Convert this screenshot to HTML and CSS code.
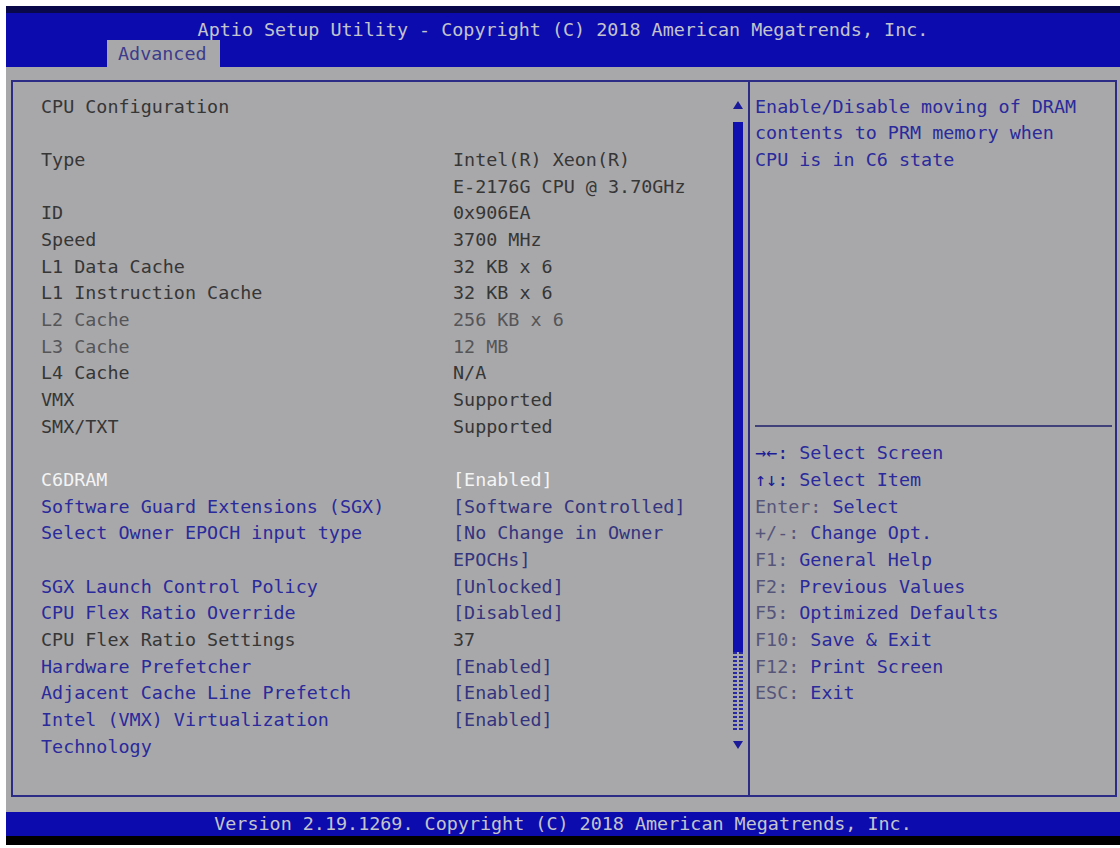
FILE: index.html
```html
<!DOCTYPE html>
<html lang="en">
<head>
  <meta charset="UTF-8">
  <title>Aptio Setup Utility</title>
  <link rel="stylesheet" href="styles.css">
</head>
<body>

  <div class="screen">
    <div class="top">
      <div class="title">Aptio Setup Utility - Copyright (C) 2018 American Megatrends, Inc.</div>
      <div class="tabs">
        <span class="tab">Advanced</span>
      </div>
    </div>

    <div class="panel">
      <div class="items">
        <div class="row"><span class="label">CPU Configuration</span></div>
        <div class="row blank"></div>
        <div class="row"><span class="label">Type</span><span class="value">Intel(R) Xeon(R)<br>E-2176G CPU @ 3.70GHz</span></div>
        <div class="row"><span class="label">ID</span><span class="value">0x906EA</span></div>
        <div class="row"><span class="label">Speed</span><span class="value">3700 MHz</span></div>
        <div class="row"><span class="label">L1 Data Cache</span><span class="value">32 KB x 6</span></div>
        <div class="row"><span class="label">L1 Instruction Cache</span><span class="value">32 KB x 6</span></div>
        <div class="row dim"><span class="label">L2 Cache</span><span class="value">256 KB x 6</span></div>
        <div class="row dim"><span class="label">L3 Cache</span><span class="value">12 MB</span></div>
        <div class="row"><span class="label">L4 Cache</span><span class="value">N/A</span></div>
        <div class="row"><span class="label">VMX</span><span class="value">Supported</span></div>
        <div class="row"><span class="label">SMX/TXT</span><span class="value">Supported</span></div>
        <div class="row blank"></div>
        <div class="row selected"><span class="label">C6DRAM</span><span class="value">[Enabled]</span></div>
        <div class="row option"><span class="label">Software Guard Extensions (SGX)</span><span class="value">[Software Controlled]</span></div>
        <div class="row option"><span class="label">Select Owner EPOCH input type</span><span class="value">[No Change in Owner<br>EPOCHs]</span></div>
        <div class="row option"><span class="label">SGX Launch Control Policy</span><span class="value">[Unlocked]</span></div>
        <div class="row option"><span class="label">CPU Flex Ratio Override</span><span class="value">[Disabled]</span></div>
        <div class="row"><span class="label">CPU Flex Ratio Settings</span><span class="value">37</span></div>
        <div class="row option"><span class="label">Hardware Prefetcher</span><span class="value">[Enabled]</span></div>
        <div class="row option"><span class="label">Adjacent Cache Line Prefetch</span><span class="value">[Enabled]</span></div>
        <div class="row option"><span class="label">Intel (VMX) Virtualization<br>Technology</span><span class="value">[Enabled]</span></div>
      </div>

      <div class="scroll">
        <svg class="arrow up" width="10" height="8" viewBox="0 0 10 8"><path d="M5 0 L10 8 L0 8 Z"/></svg>
        <div class="thumb"></div>
        <div class="track"></div>
        <svg class="arrow down" width="10" height="8" viewBox="0 0 10 8"><path d="M0 0 L10 0 L5 8 Z"/></svg>
      </div>

      <div class="divider"></div>

      <div class="help">
        <div class="help-text">Enable/Disable moving of DRAM<br>contents to PRM memory when<br>CPU is in C6 state</div>
        <div class="keys">
          <div><span class="key arrows">&rarr;&larr;:</span> Select Screen</div>
          <div><span class="key arrows">&uarr;&darr;:</span> Select Item</div>
          <div><span class="key">Enter:</span> Select</div>
          <div><span class="key">+/-:</span> Change Opt.</div>
          <div><span class="key">F1:</span> General Help</div>
          <div><span class="key">F2:</span> Previous Values</div>
          <div><span class="key">F5:</span> Optimized Defaults</div>
          <div><span class="key">F10:</span> Save &amp; Exit</div>
          <div><span class="key">F12:</span> Print Screen</div>
          <div><span class="key">ESC:</span> Exit</div>
        </div>
      </div>
    </div>

    <div class="footer">Version 2.19.1269. Copyright (C) 2018 American Megatrends, Inc.</div>
  </div>

</body>
</html>
```

FILE: styles.css
```css
body {
  margin: 0;
  padding: 0;
  background: #ffffff;
  font-family: 'DejaVu Sans Mono', 'Liberation Mono', monospace;
  font-size: 18.4px;
}

.screen {
  margin: 6px 0 0 6px;
  width: 1114px;
  height: 839px;
  background-color: #a8a8aa;
  display: flex;
  flex-direction: column;
}

.top {
  height: 54px;
  border-top: 7px solid #08084a;
  background-color: #0c0cae;
  display: flex;
  flex-direction: column;
}

.title {
  padding-top: 7px;
  line-height: 20px;
  text-align: center;
  color: #c4c4cc;
}

.tabs {
  margin-left: 101px;
  height: 27px;
  display: flex;
}

.tab {
  background-color: #a8a8aa;
  color: #3c3c8c;
  line-height: 27px;
  padding: 0 13px 0 11px;
}

.panel {
  margin: 13px 3px 0 5px;
  height: 717px;
  box-sizing: border-box;
  border: 2px solid #2c2c86;
  display: grid;
  grid-template-columns: 718px 17px 2px 1fr;
}

.items {
  padding: 11.7px 0 0 28px;
  line-height: 26.67px;
  color: #363636;
}

.row {
  display: grid;
  grid-template-columns: 412px 1fr;
}

.row.blank {
  height: 26.67px;
}

.row.dim {
  color: #555558;
}

.row.option {
  color: #2a2a9c;
}

.row.option .value {
  color: #34347e;
}

.row.selected {
  color: #f4f4f4;
}

.scroll {
  padding-left: 2px;
  display: flex;
  flex-direction: column;
}

.arrow {
  fill: #1a1a9a;
}

.arrow.up {
  margin-top: 19px;
}

.thumb {
  margin-top: 13px;
  width: 10px;
  height: 530px;
  background-color: #1010b0;
}

.track {
  width: 10px;
  height: 78px;
  background:
    linear-gradient(to right, transparent 4px, #a8a8aa 4px 6px, transparent 6px),
    repeating-linear-gradient(to bottom, #2a2aa0 0 2px, transparent 2px 4px);
}

.arrow.down {
  margin-top: 11px;
}

.divider {
  background-color: #2c2c86;
}

.help {
  padding: 11.7px 3px 0 5px;
  line-height: 26.67px;
  color: #2a2a9c;
}

.help-text {
  height: 331.3px;
  border-bottom: 2px solid #40407a;
}

.keys {
  margin-top: 13.4px;
}

.key {
  color: #55557a;
}

.key.arrows {
  color: #1c1c96;
}

.footer {
  margin-top: 15px;
  height: 24px;
  line-height: 24px;
  text-align: center;
  background-color: #0c0cae;
  color: #c4c4cc;
  border-bottom: 9px solid #000000;
}
```
